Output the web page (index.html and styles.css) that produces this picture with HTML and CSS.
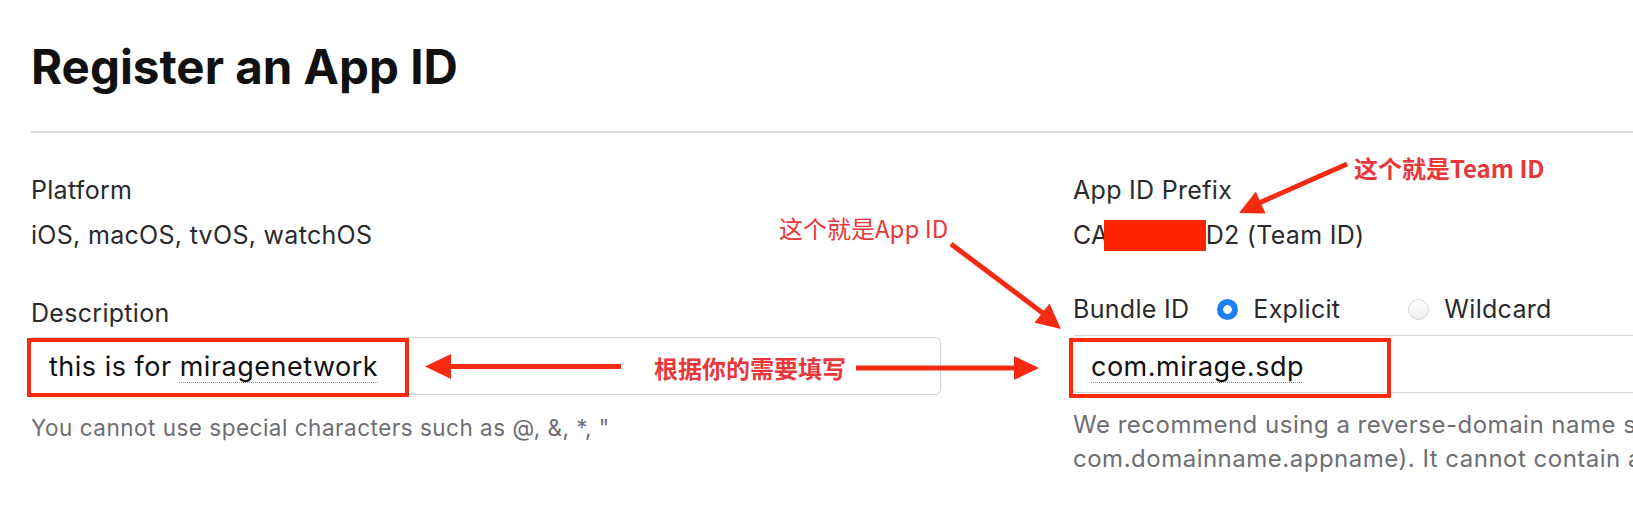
FILE: index.html
```html
<!DOCTYPE html>
<html lang="en">
<head>
<meta charset="utf-8">
<title>Register an App ID</title>
<link rel="stylesheet" href="styles.css">
</head>
<body>
<div class="page">
  <h1 class="title">Register an App ID</h1>
  <div class="rule"></div>
  <div class="form">
    <div class="col">
      <div class="field">
        <div class="label">Platform</div>
        <div class="value">iOS, macOS, tvOS, watchOS</div>
      </div>
      <div class="field field-desc">
        <div class="label">Description</div>
        <div class="input input-desc">this is for <span class="spell">miragenetwork</span></div>
        <div class="help help-desc">You cannot use special characters such as @, &amp;, *, "</div>
      </div>
    </div>
    <div class="col col-right">
      <div class="field">
        <div class="label">App ID Prefix</div>
        <div class="value value-prefix">CA<span class="redact"></span>D2 (Team ID)</div>
      </div>
      <div class="field field-bundle">
        <div class="label-row">
          <span class="label">Bundle ID</span>
          <span class="radio radio-first"><span class="dot dot-on"></span>Explicit</span>
          <span class="radio"><span class="dot"></span>Wildcard</span>
        </div>
        <div class="input input-bundle"><span class="spell">com.mirage.sdp</span></div>
        <div class="help help-bundle">We recommend using a reverse-domain name style string (i.e.,<br>com.domainname.appname). It cannot contain an asterisk (*).</div>
      </div>
    </div>
  </div>
  <svg class="notes" width="1633" height="522" viewBox="0 0 1633 522">
    <rect class="box" x="29" y="340" width="378" height="55"/>
    <rect class="box" x="1071" y="340" width="318" height="56"/>
    <line class="arrow-line" x1="621" y1="366.5" x2="447" y2="366.5"/>
    <polygon class="arrow-head" points="425,366.5 451,354 451,379"/>
    <line class="arrow-line" x1="856" y1="368" x2="1018" y2="368"/>
    <polygon class="arrow-head" points="1039,368 1014,356 1014,380"/>
    <text class="note note-bold" x="654" y="378">根据你的需要填写</text>
    <text class="note note-light" x="779" y="238">这个就是App ID</text>
    <line class="arrow-line" x1="951" y1="244" x2="1044" y2="314"/>
    <polygon class="arrow-head" points="1061,329 1034.5,322.8 1049.5,303.6"/>
    <text class="note note-bold" x="1354" y="178">这个就是Team ID</text>
    <line class="arrow-line" x1="1347" y1="164" x2="1259" y2="203"/>
    <polygon class="arrow-head" points="1239,213 1265.5,213.5 1255.8,191.5"/>
  </svg>
</div>
</body>
</html>
```

FILE: styles.css
```css
html, body {
  margin: 0;
  padding: 0;
  background: #ffffff;
  overflow: hidden;
}

body {
  width: 1633px;
  height: 522px;
  font-family: Inter, "Liberation Sans", sans-serif;
  color: #1d1d1f;
}

.page {
  position: relative;
  width: 1633px;
  height: 522px;
  padding-left: 31px;
  box-sizing: border-box;
  overflow: hidden;
}

.title {
  margin: 0;
  padding-top: 43px;
  font-size: 47.5px;
  line-height: 48px;
  font-weight: 700;
  color: #111111;
}

.rule {
  height: 2px;
  margin-top: 40px;
  background: #dedede;
}

.form {
  display: grid;
  grid-template-columns: 910px 900px;
  column-gap: 132px;
  margin-top: 42px;
}

.label {
  font-size: 25px;
  line-height: 30px;
  letter-spacing: 0.3px;
  color: #2a2a2c;
}

.value {
  margin-top: 15px;
  font-size: 25px;
  line-height: 30px;
  letter-spacing: 0.3px;
  color: #2a2a2c;
}

.value-prefix {
  margin-top: 15px;
}

.redact {
  display: inline-block;
  width: 102px;
  height: 31px;
  margin-left: -5px;
  background: #ff2400;
  vertical-align: -7px;
}

.field-desc {
  margin-top: 48px;
}

.field-bundle {
  margin-top: 43px;
}

.label-row {
  display: flex;
  align-items: center;
  height: 30px;
}

.radio {
  display: flex;
  align-items: center;
  gap: 15px;
  font-size: 25px;
  letter-spacing: 0.3px;
  color: #2a2a2c;
  margin-left: 68px;
}

.radio-first {
  margin-left: 28px;
}

.dot {
  width: 21px;
  height: 21px;
  border-radius: 50%;
  box-sizing: border-box;
  border: 1px solid #d4d4d4;
  background: linear-gradient(#ffffff, #efefef);
}

.dot-on {
  border: none;
  background: radial-gradient(circle, #ffffff 0 4px, #1b80f6 4.6px);
}

.input {
  box-sizing: border-box;
  height: 58px;
  border: 1px solid #d2d2d7;
  border-radius: 6px;
  padding: 3px 20px 0;
  font-size: 27px;
  line-height: 52px;
  letter-spacing: 0.5px;
  color: #111111;
  white-space: nowrap;
}

.input-desc {
  margin-top: 9px;
  margin-left: -3px;
}

.input-bundle {
  margin-top: 11px;
  margin-left: -3px;
  padding-top: 6px;
  line-height: 50px;
}

.spell {
  text-decoration: underline dotted rgba(225, 70, 70, 0.75);
  text-decoration-thickness: 1px;
  text-underline-offset: 6px;
}

.help {
  font-size: 24px;
  line-height: 34px;
  letter-spacing: 0.5px;
  color: #6e6e73;
  white-space: nowrap;
}

.help-desc {
  margin-top: 16px;
  font-size: 22.5px;
}

.help-bundle {
  margin-top: 15px;
}

.notes {
  position: absolute;
  left: 0;
  top: 0;
  pointer-events: none;
}

.box {
  fill: none;
  stroke: #f92a10;
  stroke-width: 4;
}

.arrow-line {
  stroke: #f72a12;
  stroke-width: 5;
}

.arrow-head {
  fill: #f72a12;
}

.note {
  font-family: "Noto Sans CJK SC", "Noto Sans", sans-serif;
  fill: #e8383b;
}

.note-bold {
  font-size: 24px;
  font-weight: 700;
}

.note-light {
  font-size: 24px;
  font-weight: 400;
}
```
